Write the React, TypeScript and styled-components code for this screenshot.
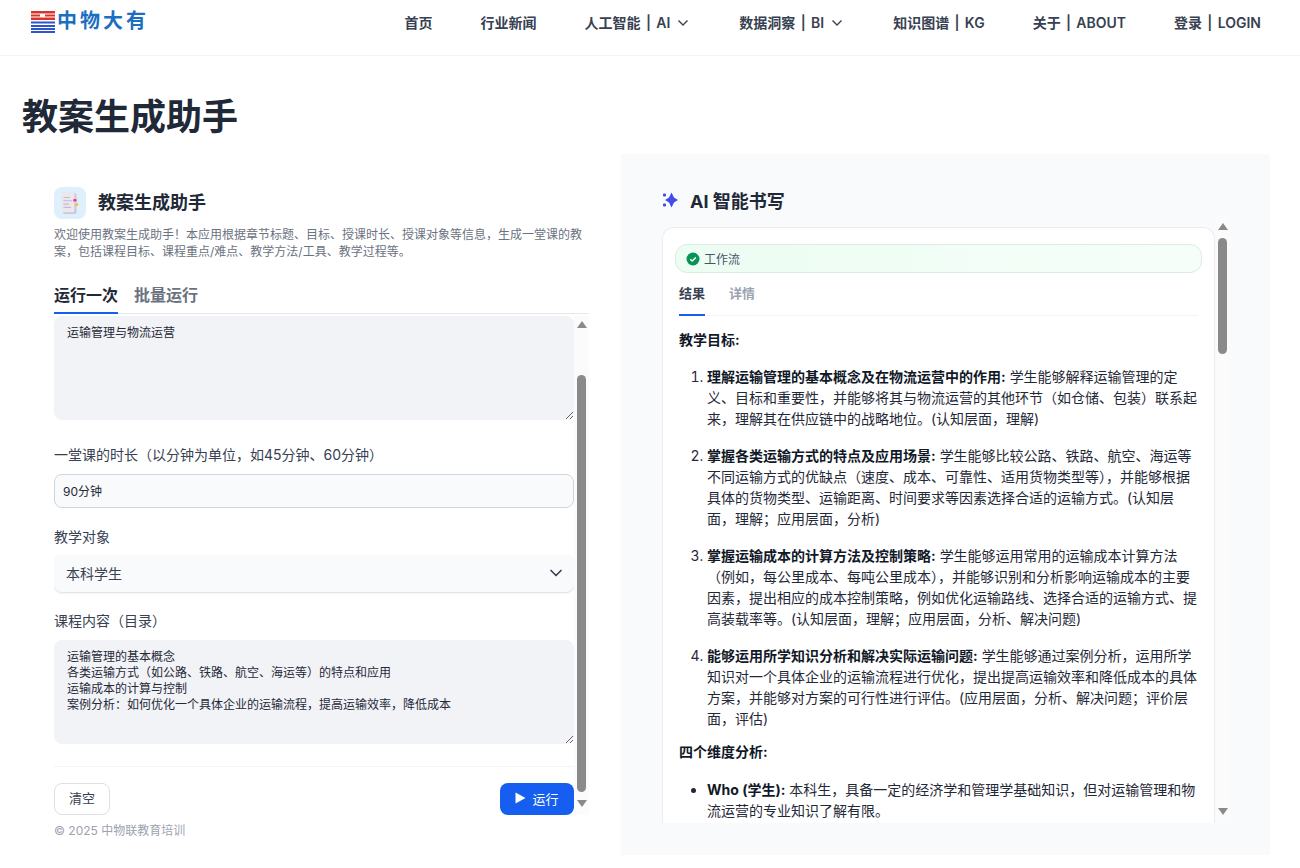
import React from "react";
import styled, { createGlobalStyle } from "styled-components";
import { ChevronDown } from "lucide-react";

const GlobalStyle = createGlobalStyle`
  html, body {
    margin: 0;
    height: 100%;
    overflow: hidden;
    background: #fff;
    font-family: Inter, "Noto Sans CJK SC", sans-serif;
    color: #1f2937;
  }
  * { box-sizing: border-box; }
`;

const Header = styled.header`
  height: 56px;
  border-bottom: 1px solid #f3f4f6;
  display: flex;
  align-items: center;
  justify-content: space-between;
  padding: 0 39px 12px 31px;
`;

const Logo = styled.div`
  display: flex;
  align-items: center;
  gap: 2px;
`;

const LogoText = styled.span`
  margin-bottom: 3px;
  font-size: 20px;
  font-weight: 700;
  letter-spacing: 3px;
  line-height: 24px;
  color: #1b6ec2;
  font-family: "Noto Sans CJK SC", sans-serif;
`;

const Nav = styled.nav`
  display: flex;
  gap: 48px;
  padding-top: 3px;
`;

const NavItem = styled.a`
  display: flex;
  align-items: center;
  gap: 7px;
  font-size: 14px;
  font-weight: 600;
  line-height: 24px;
  word-spacing: 1.8px;
  color: #374151;
  white-space: nowrap;

  svg {
    margin-right: 2px;
  }
`;

const Title = styled.h1`
  margin: 41px 0 17px 22px;
  font-size: 36px;
  line-height: 40px;
  font-weight: 700;
  color: #1f2937;
`;

const Columns = styled.main`
  display: grid;
  grid-template-columns: 583px 649px;
  gap: 16px;
  margin-left: 22px;
`;

const LeftPanel = styled.section`
  padding: 33px 16px 0 32px;
`;

const AppHead = styled.div`
  display: flex;
  align-items: center;
  gap: 12px;
`;

const AppIcon = styled.div`
  width: 32px;
  height: 32px;
  border-radius: 8px;
  background: #dff0fd;
  display: flex;
  align-items: center;
  justify-content: center;
`;

const AppName = styled.h2`
  margin: 0;
  font-size: 18px;
  font-weight: 700;
  line-height: 28px;
  color: #1f2937;
`;

const Description = styled.p`
  margin: 7px 0 0;
  padding-right: 6px;
  font-size: 12px;
  line-height: 17px;
  color: #6b7280;
`;

const Tabs = styled.div`
  display: flex;
  gap: 16px;
  margin-top: 23px;
  border-bottom: 1px solid #e5e7eb;
`;

const Tab = styled.div<{ $active?: boolean }>`
  font-size: 16px;
  font-weight: 700;
  line-height: 24px;
  padding-bottom: 5px;
  margin-bottom: -1px;
  color: ${(p) => (p.$active ? "#1f2937" : "#6b7280")};
  border-bottom: 2px solid ${(p) => (p.$active ? "#155eef" : "transparent")};
`;

const ScrollBox = styled.div`
  display: flex;
  height: 499px;
  margin-top: 2px;
`;

const FormBody = styled.div`
  flex: 1;
  min-width: 0;
  overflow: hidden;
`;

const Rail = styled.div`
  width: 15px;
  flex: none;
  background: #fbfbfb;
  display: flex;
  flex-direction: column;
  align-items: center;
`;

const ArrowUp = styled.div<{ $top: number }>`
  margin-top: ${(p) => p.$top}px;
  width: 0;
  height: 0;
  border-left: 5px solid transparent;
  border-right: 5px solid transparent;
  border-bottom: 7px solid #8a8a8a;
`;

const ArrowDown = styled.div`
  margin-top: auto;
  margin-bottom: 8px;
  width: 0;
  height: 0;
  border-left: 5px solid transparent;
  border-right: 5px solid transparent;
  border-top: 7px solid #8a8a8a;
`;

const Thumb = styled.div<{ $offset: number; $length: number }>`
  width: 9px;
  margin-top: ${(p) => p.$offset}px;
  height: ${(p) => p.$length}px;
  border-radius: 5px;
  background: #8a8a8a;
`;

const Area = styled.textarea`
  display: block;
  width: 100%;
  height: 104px;
  padding: 9px 13px;
  border: 0;
  outline: 0;
  border-radius: 8px;
  background: #f2f3f7;
  font: 12px/16px Inter, "Noto Sans CJK SC", sans-serif;
  color: #1f2937;
  resize: vertical;
`;

const Label = styled.div<{ $gap: number; $after: number }>`
  margin: ${(p) => p.$gap}px 0 ${(p) => p.$after}px;
  font-size: 14px;
  line-height: 20px;
  color: #374151;
`;

const TextInput = styled.input`
  display: block;
  width: 100%;
  height: 34px;
  padding: 0 8px 2px;
  border: 1px solid #d0d5dd;
  border-radius: 8px;
  outline: 0;
  background: #f9fafb;
  font: 12px Inter, "Noto Sans CJK SC", sans-serif;
  color: #1f2937;
`;

const SelectBox = styled.div`
  height: 37px;
  padding: 0 8px 1px 12px;
  display: flex;
  align-items: center;
  justify-content: space-between;
  border-radius: 8px;
  background: #f9fafb;
  box-shadow: 0 1px 2px rgba(16, 24, 40, 0.15);
  font-size: 14px;
  color: #374151;
`;

const Actions = styled.div`
  margin-top: 22px;
  padding-top: 16px;
  border-top: 1px solid #f2f4f7;
  display: flex;
  justify-content: space-between;
`;

const ClearButton = styled.button`
  width: 56px;
  height: 32px;
  padding: 0 0 3px;
  border: 1px solid #e0e0e0;
  border-radius: 8px;
  background: #fff;
  font: 13px Inter, "Noto Sans CJK SC", sans-serif;
  color: #374151;
`;

const RunButton = styled.button`
  width: 74px;
  height: 32px;
  padding: 0 0 2px;
  border: 0;
  border-radius: 8px;
  background: #155eef;
  display: flex;
  align-items: center;
  justify-content: center;
  gap: 6px;
  font: 13px Inter, "Noto Sans CJK SC", sans-serif;
  color: #fff;
`;

const Copyright = styled.div`
  margin-top: 8px;
  font-size: 12px;
  line-height: 16px;
  color: #9ca3af;
`;

const RightPanel = styled.section`
  height: 701px;
  padding: 33px 40px 0 41px;
  background: #f9fafb;
`;

const AiHead = styled.div`
  display: flex;
  align-items: center;
  gap: 12px;
  height: 28px;
  padding-bottom: 2px;
`;

const AiTitle = styled.h2`
  margin: 0;
  font-size: 18px;
  font-weight: 700;
  color: #1f2937;
`;

const ResultBox = styled.div`
  display: flex;
  height: 608px;
`;

const Card = styled.div`
  flex: 1;
  min-width: 0;
  margin-top: 12px;
  padding: 16px 12px 0;
  border: 1px solid #eaecf0;
  border-bottom: 0;
  border-radius: 12px 12px 0 0;
  background: #fff;
  overflow: hidden;
`;

const Badge = styled.div`
  height: 29px;
  padding: 0 10px;
  display: flex;
  align-items: center;
  gap: 4px;
  border: 1px solid #dcebe2;
  border-radius: 12px;
  background: linear-gradient(90deg, #ecfdf3, #f6fef9);
  font-size: 12px;
  color: #475467;
`;

const ResultTabs = styled.div`
  display: flex;
  gap: 24px;
  margin: 8px 4px 0;
  border-bottom: 1px solid #f2f4f7;
`;

const ResultTab = styled.div<{ $active?: boolean }>`
  font-size: 13px;
  font-weight: 600;
  line-height: 24px;
  padding-bottom: 9px;
  margin-bottom: -1px;
  color: ${(p) => (p.$active ? "#374151" : "#9ca3af")};
  border-bottom: 2px solid ${(p) => (p.$active ? "#155eef" : "transparent")};
`;

const Markdown = styled.div`
  margin: 13px 4px 0;
  font-size: 14px;
  line-height: 21px;
  color: #1f2937;

  p {
    margin: 0 0 16px;
  }
  ol, ul {
    margin: 0;
    padding-left: 28px;
  }
  ol + p {
    margin-top: 12px;
    margin-bottom: 17px;
  }
  li {
    margin-bottom: 16px;
  }
  li:last-child {
    margin-bottom: 0;
  }
  strong {
    font-weight: 700;
    color: #111827;
  }
`;

const DocIcon = () => (
  <svg width="24" height="24" viewBox="0 0 22 22">
    <rect x="4.5" y="2" width="12.5" height="19" rx="1.5" fill="#cfc8d8" />
    <rect x="3" y="1" width="12" height="18.5" rx="1.5" fill="#ebe7ef" />
    <path d="M5 6h6M5 9h8M5 12h5M5 15h7" stroke="#c4bccd" strokeWidth="1" />
    <rect x="14" y="7.5" width="3" height="2" fill="#ee2a8b" />
    <rect x="15.5" y="11.5" width="3" height="2" fill="#fbbf24" />
  </svg>
);

const Sparkle = () => (
  <svg width="16" height="16" viewBox="0 0 16 16" fill="#444ce7">
    <path d="M9.5.5L12 5.500 16 8l-4 2.500-2.500 5-2.500-5L3 8l4-2.500z" />
    <rect x="1" y="1.5" width="3" height="3" rx="0.8" />
    <rect x="1" y="11.5" width="3" height="3" rx="0.8" />
  </svg>
);

const CheckDot = () => (
  <svg width="14" height="14" viewBox="0 0 14 14">
    <circle cx="7" cy="7" r="6.5" fill="#079455" />
    <path d="M4.2 7.2l2 1.9 3.6-3.7" fill="none" stroke="#fff" strokeWidth="1.4" />
  </svg>
);

const LogoMark = () => (
  <svg width="24" height="22" viewBox="0 0 24 22">
    <rect y="0" width="24" height="2.5" fill="#d9342b" />
    <rect y="3.5" width="9" height="2" fill="#d9342b" />
    <rect x="14" y="3.5" width="10" height="2" fill="#d9342b" />
    <rect y="6.5" width="24" height="2.5" fill="#d9342b" />
    <rect y="10.5" width="24" height="2" fill="#2f55c9" />
    <rect y="14" width="24" height="2" fill="#2f55c9" />
    <rect y="17" width="24" height="2" fill="#2f55c9" />
    <rect y="20" width="24" height="2" fill="#2f55c9" />
  </svg>
);

const NavChevron = () => (
  <svg width="12" height="8" viewBox="0 0 12 8">
    <path d="M1.5 1.5L6 6l4.500-4.500" fill="none" stroke="#374151" strokeWidth="1.4" />
  </svg>
);

const navItems = [
  { text: "首页" },
  { text: "行业新闻" },
  { text: "人工智能 | AI", menu: true },
  { text: "数据洞察 | BI", menu: true },
  { text: "知识图谱 | KG" },
  { text: "关于 | ABOUT" },
  { text: "登录 | LOGIN" },
];

const outline = `运输管理的基本概念
各类运输方式（如公路、铁路、航空、海运等）的特点和应用
运输成本的计算与控制
案例分析：如何优化一个具体企业的运输流程，提高运输效率，降低成本`;

export default function App() {
  return (
    <>
      <GlobalStyle />
      <Header>
        <Logo>
          <LogoMark />
          <LogoText>中物大有</LogoText>
        </Logo>
        <Nav>
          {navItems.map((item) => (
            <NavItem key={item.text}>
              {item.text}
              {item.menu && <NavChevron />}
            </NavItem>
          ))}
        </Nav>
      </Header>
      <Title>教案生成助手</Title>
      <Columns>
        <LeftPanel>
          <AppHead>
            <AppIcon>
              <DocIcon />
            </AppIcon>
            <AppName>教案生成助手</AppName>
          </AppHead>
          <Description>
            欢迎使用教案生成助手！本应用根据章节标题、目标、授课时长、授课对象等信息，生成一堂课的教案，包括课程目标、课程重点/难点、教学方法/工具、教学过程等。
          </Description>
          <Tabs>
            <Tab $active>运行一次</Tab>
            <Tab>批量运行</Tab>
          </Tabs>
          <ScrollBox>
            <FormBody>
              <Area readOnly defaultValue="运输管理与物流运营" />
              <Label $gap={25} $after={9}>
                一堂课的时长（以分钟为单位，如45分钟、60分钟）
              </Label>
              <TextInput readOnly value="90分钟" />
              <Label $gap={19} $after={8}>
                教学对象
              </Label>
              <SelectBox>
                本科学生
                <ChevronDown size={20} strokeWidth={2} />
              </SelectBox>
              <Label $gap={19} $after={9}>
                课程内容（目录）
              </Label>
              <Area readOnly defaultValue={outline} />
              <Actions>
                <ClearButton>清空</ClearButton>
                <RunButton>
                  <svg width="11" height="12" viewBox="0 0 11 12">
                    <path d="M0.5 0.5L10.5 6 0.5 11.5z" fill="#fff" />
                  </svg>
                  运行
                </RunButton>
              </Actions>
            </FormBody>
            <Rail>
              <ArrowUp $top={5} />
              <Thumb $offset={47} $length={417} />
              <ArrowDown />
            </Rail>
          </ScrollBox>
          <Copyright>© 2025 中物联教育培训</Copyright>
        </LeftPanel>
        <RightPanel>
          <AiHead>
            <Sparkle />
            <AiTitle>AI 智能书写</AiTitle>
          </AiHead>
          <ResultBox>
            <Card>
              <Badge>
                <CheckDot />
                工作流
              </Badge>
              <ResultTabs>
                <ResultTab $active>结果</ResultTab>
                <ResultTab>详情</ResultTab>
              </ResultTabs>
              <Markdown>
                <p>
                  <strong>教学目标:</strong>
                </p>
                <ol>
                  <li>
                    <strong>理解运输管理的基本概念及在物流运营中的作用:</strong>{" "}
                    学生能够解释运输管理的定义、目标和重要性，并能够将其与物流运营的其他环节（如仓储、包装）联系起来，理解其在供应链中的战略地位。(认知层面，理解)
                  </li>
                  <li>
                    <strong>掌握各类运输方式的特点及应用场景:</strong>{" "}
                    学生能够比较公路、铁路、航空、海运等不同运输方式的优缺点（速度、成本、可靠性、适用货物类型等），并能够根据具体的货物类型、运输距离、时间要求等因素选择合适的运输方式。(认知层面，理解；应用层面，分析)
                  </li>
                  <li>
                    <strong>掌握运输成本的计算方法及控制策略:</strong>{" "}
                    学生能够运用常用的运输成本计算方法（例如，每公里成本、每吨公里成本），并能够识别和分析影响运输成本的主要因素，提出相应的成本控制策略，例如优化运输路线、选择合适的运输方式、提高装载率等。(认知层面，理解；应用层面，分析、解决问题)
                  </li>
                  <li>
                    <strong>能够运用所学知识分析和解决实际运输问题:</strong>{" "}
                    学生能够通过案例分析，运用所学知识对一个具体企业的运输流程进行优化，提出提高运输效率和降低成本的具体方案，并能够对方案的可行性进行评估。(应用层面，分析、解决问题；评价层面，评估)
                  </li>
                </ol>
                <p>
                  <strong>四个维度分析:</strong>
                </p>
                <ul>
                  <li>
                    <strong>Who (学生):</strong>{" "}
                    本科生，具备一定的经济学和管理学基础知识，但对运输管理和物流运营的专业知识了解有限。
                  </li>
                </ul>
              </Markdown>
            </Card>
            <Rail>
              <ArrowUp $top={8} />
              <Thumb $offset={8} $length={116} />
              <ArrowDown />
            </Rail>
          </ResultBox>
        </RightPanel>
      </Columns>
    </>
  );
}
